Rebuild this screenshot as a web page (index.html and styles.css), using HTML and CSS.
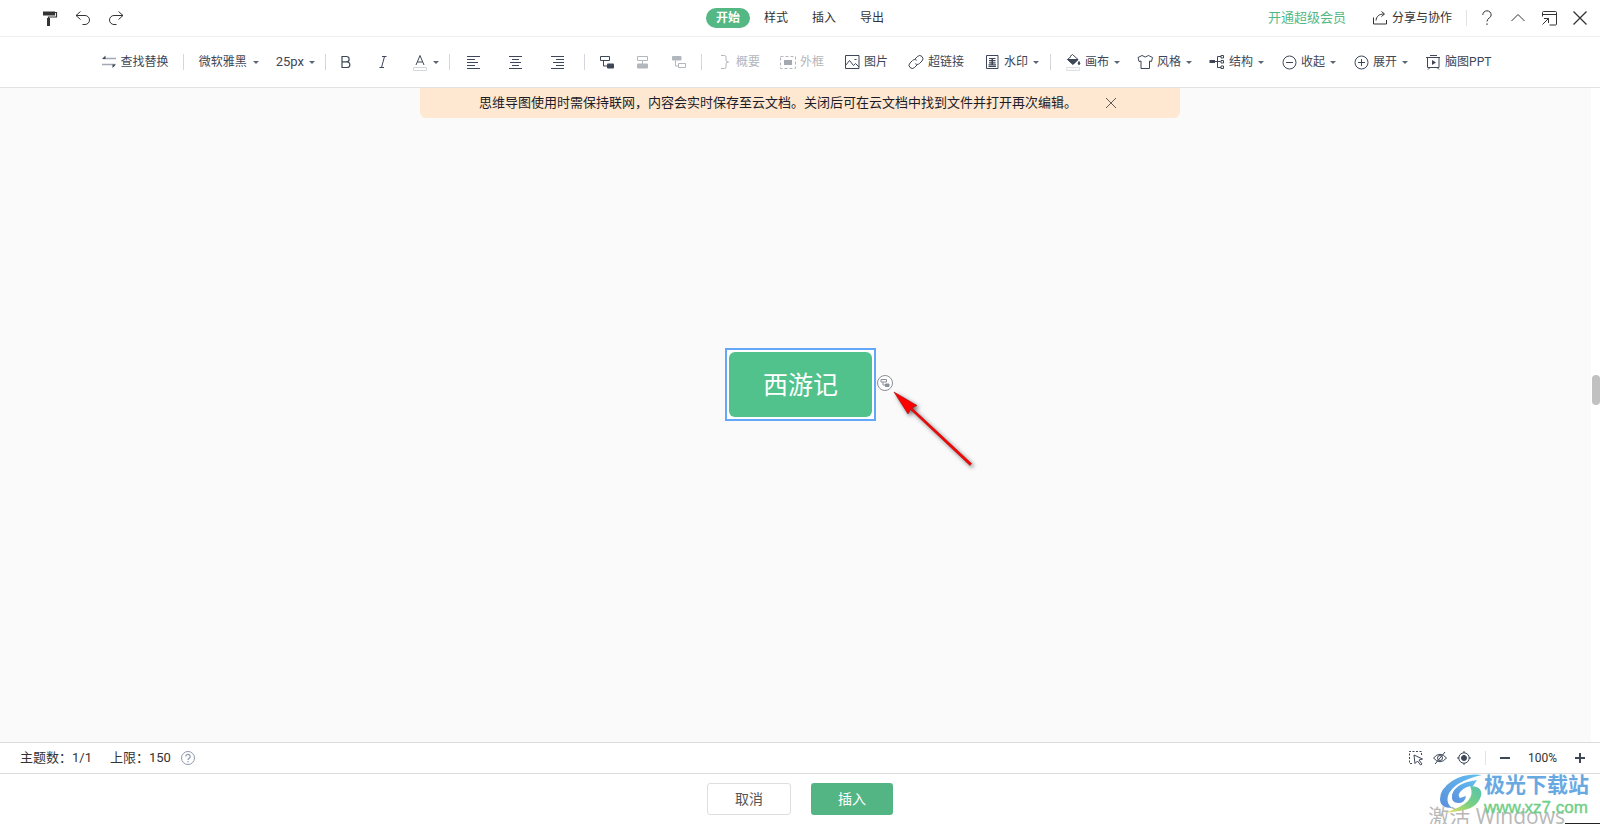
FILE: index.html
```html
<!DOCTYPE html>
<html lang="zh-CN">
<head>
<meta charset="utf-8">
<title>思维导图</title>
<link rel="stylesheet" href="styles.css">
</head>
<body>
<div class="app">
  <header class="topbar">
    <div class="topbar-left">
      <button class="icon-btn" aria-label="格式刷"><svg class="ico" viewBox="0 0 16 16"><path fill="#333" d="M1 1.500h12v4H1z"/><path d="M13 2.500h1.500v4.500H6.500v3" fill="none" stroke="#333" stroke-width="1.200"/><path fill="#333" d="M5 8h3v8H5z"/></svg></button>
      <button class="icon-btn" aria-label="撤销"><svg class="ico line" viewBox="0 0 16 16"><path d="M5.500 1.500 1 5.500l4.500 4M1 5.500h9a4.500 4.500 0 0 1 0 9H7.500"/></svg></button>
      <button class="icon-btn" aria-label="重做"><svg class="ico line" viewBox="0 0 16 16"><path d="M10.500 1.500 15 5.500l-4.500 4M15 5.500H6a4.500 4.500 0 0 0 0 9h2.500"/></svg></button>
    </div>
    <nav class="tabs">
      <button class="tab tab-active">开始</button>
      <button class="tab">样式</button>
      <button class="tab">插入</button>
      <button class="tab">导出</button>
    </nav>
    <div class="topbar-right">
      <a class="vip" href="#">开通超级会员</a>
      <button class="share"><svg class="ico line" viewBox="0 0 16 16"><path d="M1.500 7.500v6.500h13v-4M4 10.500c.3-4 3-6.500 8-6.500M9.500 1.500l3 2.500-3 2.500"/></svg><span>分享与协作</span></button>
      <span class="sep sep-light"></span>
      <div class="window-tools">
        <button class="icon-btn" aria-label="帮助"><svg class="ico line" viewBox="0 0 16 16"><path d="M3.800 5a4.200 4.200 0 0 1 8.400 0c0 3-4.200 3-4.200 6.500M8 13.300v1.700"/></svg></button>
        <button class="icon-btn" aria-label="收起功能区"><svg class="ico line" viewBox="0 0 16 16"><path d="m1.500 11 6.500-6.500 6.500 6.500"/></svg></button>
        <button class="icon-btn" aria-label="还原窗口"><svg class="ico line" viewBox="0 0 16 16"><path d="M1.500 6.500v-4a1 1 0 0 1 1-1h12a1 1 0 0 1 1 1v11.500a1 1 0 0 1-1 1H8.500M1.500 4.500h14M1.500 14.500l6-6M3 8.500h4.500V13"/></svg></button>
        <button class="icon-btn" aria-label="关闭"><svg class="ico line strong" viewBox="0 0 16 16"><path d="m1.500 1.500 13 13m0-13-13 13"/></svg></button>
      </div>
    </div>
  </header>

  <div class="toolbar">
    <div class="group group-find">
      <button class="tool"><svg class="ico" viewBox="0 0 16 16"><path d="M2 4.500h13M1 10.500h13" stroke="#a3a9b3" stroke-width="1.300"/><path fill="#3d4757" d="M1 5l3.500-3.500V5zM15 10.500 11.500 14v-3.500z"/></svg><span>查找替换</span></button>
    </div>
    <span class="sep"></span>
    <div class="group group-font">
      <button class="tool"><span>微软雅黑</span><i class="caret"></i></button>
      <button class="tool tool-size"><span>25px</span><i class="caret"></i></button>
    </div>
    <span class="sep"></span>
    <div class="group group-text">
      <button class="tool" aria-label="加粗"><svg class="ico line" viewBox="0 0 16 16"><path d="M4 2.500h4.500a2.600 2.600 0 0 1 0 5.300H4zM4 7.800h5a2.850 2.850 0 0 1 0 5.700H4z" stroke-width="1.200"/></svg></button>
      <button class="tool" aria-label="倾斜"><svg class="ico line" viewBox="0 0 16 16"><path d="M7 2.500h4.500M4.500 13.500H9M9.500 2.500l-3 11"/></svg></button>
      <button class="tool" aria-label="字体颜色"><svg class="ico line" viewBox="0 0 16 16"><path d="M4 11 8 1.500 12 11M5.500 8h5"/><path d="M1.500 13.500h13v3h-13z" stroke="#d4d7dc" fill="#fff"/></svg><i class="caret"></i></button>
    </div>
    <span class="sep"></span>
    <div class="group group-align">
      <button class="tool" aria-label="左对齐"><svg class="ico line crisp" viewBox="0 0 16 16"><path d="M1 2.500h13M1 5.500h8M1 8.500h11M1 11.500h8M1 14.500h13"/></svg></button>
      <button class="tool" aria-label="居中"><svg class="ico line crisp" viewBox="0 0 16 16"><path d="M1 2.500h13M4 5.500h7M2 8.500h11M4 11.500h7M1 14.500h13"/></svg></button>
      <button class="tool" aria-label="右对齐"><svg class="ico line crisp" viewBox="0 0 16 16"><path d="M1 2.500h13M6 5.500h8M3 8.500h11M6 11.500h8M1 14.500h13"/></svg></button>
    </div>
    <span class="sep"></span>
    <div class="group group-topic">
      <button class="tool" aria-label="子主题"><svg class="ico line" viewBox="0 0 16 16"><path d="M1.500 2.500h9v4h-9zM4.500 6.500V12H9"/><rect x="8" y="9.500" width="7" height="5" rx="1" fill="#3d4757" stroke="none"/></svg></button>
      <button class="tool tool-off" aria-label="同级主题" disabled><svg class="ico line" viewBox="0 0 16 16"><path d="M2.500 2.500h10v4h-10zM7.500 6.500V10"/><rect x="2" y="9.500" width="11" height="5" rx="1" fill="#b2b6bd" stroke="none"/></svg></button>
      <button class="tool tool-off" aria-label="父主题" disabled><svg class="ico line" viewBox="0 0 16 16"><rect x="1" y="2" width="9.500" height="4.500" rx="1" fill="#b2b6bd" stroke="none"/><path d="M4.500 6.500V12H8M7.500 9.500h7v4h-7z"/></svg></button>
    </div>
    <span class="sep"></span>
    <div class="group group-insert">
      <button class="tool tool-off" disabled><svg class="ico line" viewBox="0 0 16 16"><path d="M5 1.500h3.500q1.500 0 1.500 1.500v3q0 2 2.500 2-2.500 0-2.500 2v3q0 1.500-1.500 1.500H5"/></svg><span>概要</span></button>
      <button class="tool tool-off" disabled><svg class="ico line" viewBox="0 0 16 16"><path d="M.5 2.500h15v12H.5z" stroke-dasharray="3 2"/><path d="M4 6h8v5H4z" fill="#a4a9b1" stroke="none"/></svg><span>外框</span></button>
      <button class="tool"><svg class="ico line" viewBox="0 0 16 16"><path d="M1.500 1.500h13.500v13H1.500zM1.500 11.500l4-5 4 5 2-2 3.500 3.500"/><path d="M10.500 5.500h2"/></svg><span>图片</span></button>
      <button class="tool"><svg class="ico line" viewBox="0 0 16 16"><path d="m6.500 5.500 3-3a3.200 3.200 0 0 1 4.500 0 3.200 3.200 0 0 1 0 4.500l-2.500 2.500c-1.300 1.200-3 1.200-4.200.2M9.500 10.500l-3 3a3.200 3.200 0 0 1-4.500 0 3.200 3.200 0 0 1 0-4.500l2.500-2.500c1.300-1.200 3-1.200 4.200-.2"/></svg><span>超链接</span></button>
      <button class="tool"><svg class="ico line" viewBox="0 0 16 16"><path d="M2.500 1.500h11.500v13H2.500zM5 4.500h6.500M4.500 12.500h7.500"/><path d="M5 6h6.500v1.200H5zM5 8.200h6.500v1.200H5zM4.500 10.200h7.500v1.200H4.500zM7.500 4.500h1.500v6H7.500z" fill="#3d4757" stroke="none"/></svg><span>水印</span><i class="caret"></i></button>
    </div>
    <span class="sep"></span>
    <div class="group group-view">
      <button class="tool"><svg class="ico line" viewBox="0 0 16 16"><path d="M5 2.500 7.500.5 13 5.500 8 10 2.500 5.500 6 2.500" /><path d="M2.500 5.500H13L8 10.500zM14 7.500q2 3 0 3t0-3z" fill="#3d4757"/><path d="M1.500 13.500h13v3h-13z" stroke="#dfe1e5" fill="#fafafa"/></svg><span>画布</span><i class="caret"></i></button>
      <button class="tool"><svg class="ico line" viewBox="0 0 16 16"><path d="M5 1.500 1 3.500l1 4 2-.5v7.500h8.500V7l2 .5 1-4-4-2q-3.200 3-6.500 0z"/></svg><span>风格</span><i class="caret"></i></button>
      <button class="tool"><svg class="ico line" viewBox="0 0 16 16"><path d="M6 7.500h5.500M12 2.500H8.500v11H12M12 1.500h2.500v2.500h-2.500zM12 6.500h2.500v2.500h-2.500zM12 12h2.500v2.500h-2.500z"/><path d="M.5 6h5.500v3H.5z" fill="#3d4757" stroke="none"/></svg><span>结构</span><i class="caret"></i></button>
      <button class="tool"><svg class="ico line" viewBox="0 0 16 16"><circle cx="8.500" cy="8.500" r="6.500"/><path d="M5 8.500h7"/></svg><span>收起</span><i class="caret"></i></button>
      <button class="tool"><svg class="ico line" viewBox="0 0 16 16"><circle cx="8.500" cy="8.500" r="6.500"/><path d="M5 8.500h7M8.500 5v7"/></svg><span>展开</span><i class="caret"></i></button>
      <button class="tool"><svg class="ico line" viewBox="0 0 16 16"><path d="M5 1.500h7M1 3.500h14M2.500 3.500v10h11.500v-10M5 13.500l-2 2M12 13.500l2 2"/><path d="m7 6 4 2.500L7 11z" fill="#3d4757" stroke="none"/></svg><span>脑图PPT</span></button>
    </div>
  </div>

  <main class="canvas">
    <div class="notice">
      <span>思维导图使用时需保持联网，内容会实时保存至云文档。关闭后可在云文档中找到文件并打开再次编辑。</span>
      <button class="notice-close" aria-label="关闭提示"><svg viewBox="0 0 12 12"><path d="m1 1 10 10M11 1 1 11" fill="none" stroke="#5f5a55"/></svg></button>
    </div>
    <div class="scene">
      <div class="node"><div class="node-body">西游记</div></div>
      <button class="node-add" aria-label="添加子主题"><svg viewBox="0 0 16 16" fill="none" stroke="#8a8f98"><circle cx="8" cy="8" r="7.500" fill="#fff"/><path d="M4 4.500h5.500v2.500H4zM6 7v3h3"/><path d="M8.500 9H12v2.500H8.500z" fill="#8a8f98"/></svg></button>
      <svg class="arrow" viewBox="0 0 88 84"><path d="M2 2 25 15.500 20 18 79.500 73.500 78 75.500 18.500 19.500 16 24z" fill="#f00" stroke="#a01010" stroke-width=".6"/></svg>
    </div>
    <div class="scrollbar"><div class="thumb"></div></div>
  </main>

  <div class="status">
    <div class="counts">
      <span>主题数：1/1</span>
      <span>上限：150</span>
      <button class="hint" aria-label="说明"><svg class="ico" viewBox="0 0 16 16" fill="none" stroke="#8f99ab"><circle cx="8" cy="8" r="6.500"/><path d="M5.800 6.500a2.200 2.200 0 1 1 3.300 1.900Q8 9 8 10M8 11v1.200" stroke-width="1.200"/></svg></button>
    </div>
    <div class="view-tools">
      <button class="icon-btn" aria-label="框选"><svg class="ico line" viewBox="0 0 16 16"><path d="M4 13.500H1.500v-12h12V5" stroke-dasharray="2 1.500"/><path d="m6 5 8.500 4-3.500 1 3 4-1.500 1-3-4L7 13.500z"/></svg></button>
      <button class="icon-btn" aria-label="隐藏"><svg class="ico line" viewBox="0 0 16 16"><path d="M1.500 8Q8 .5 14.500 8 8 15.500 1.500 8zM13 2 3 14"/><circle cx="8" cy="8" r="2.500"/></svg></button>
      <button class="icon-btn" aria-label="定位"><svg class="ico line" viewBox="0 0 16 16"><circle cx="8" cy="8" r="5.200"/><circle cx="8" cy="8" r="2.500" fill="#3d4757"/><path d="M8 1v2M8 13v2M1 8h2M13 8h2"/></svg></button>
      <span class="sep sep-light"></span>
      <button class="icon-btn" aria-label="缩小"><svg class="ico bold" viewBox="0 0 16 16"><path d="M3 8h10"/></svg></button>
      <span class="zoom">100%</span>
      <button class="icon-btn" aria-label="放大"><svg class="ico bold" viewBox="0 0 16 16"><path d="M3 8h10M8 3v10"/></svg></button>
    </div>
  </div>

  <footer class="footer">
    <button class="btn btn-cancel">取消</button>
    <button class="btn btn-insert">插入</button>
  </footer>

  <div class="activate">激活 Windows</div>
  <div class="brand">
    <svg class="brand-logo" viewBox="0 0 44 40">
      <defs>
        <linearGradient id="blue" x1="1" y1="0" x2="0" y2="1"><stop offset="0" stop-color="#62c0f0"/><stop offset="1" stop-color="#5b8fdc"/></linearGradient>
        <linearGradient id="green" x1="1" y1="0" x2="0" y2="1"><stop offset="0" stop-color="#55c3b0"/><stop offset=".5" stop-color="#7bcf82"/><stop offset="1" stop-color="#eee05a"/></linearGradient>
      </defs>
      <path fill="url(#blue)" d="M43 1Q26-1 13 7 1 15 1 25q0 9 12 9-6-5-4-12Q13 8 43 1z"/>
      <path fill="url(#blue)" d="M38 6Q16 9 13 21q-1 9 8 8 5-1 6-7l-6 2q-3-3 1-7 5-5 12-5z"/>
      <path fill="url(#green)" d="M31 12q13 0 11 10-4 13-22 15l-14 2q17-6 23-12 6-7 2-15z"/>
    </svg>
    <div class="brand-text"><strong>极光下载站</strong><span>www.xz7.com</span></div>
  </div>
  <div class="edge"></div>
</div>
</body>
</html>
```
FILE: styles.css
```css
* { box-sizing: border-box; }
body {
  margin: 0;
  font-family: Roboto, "Noto Sans CJK SC", sans-serif;
  font-size: 12px;
  line-height: 16px;
  color: #333;
  background: #fff;
}
button {
  margin: 0;
  padding: 0;
  border: 0;
  background: none;
  font: inherit;
  color: inherit;
}
svg { display: block; }
.app {
  position: relative;
  display: flex;
  flex-direction: column;
  min-height: 100vh;
  overflow: hidden;
}
.ico { width: 16px; height: 16px; flex: none; overflow: visible; }
.line { fill: none; stroke: #3d4757; stroke-width: 1; }
.crisp { shape-rendering: crispEdges; }
.bold { fill: none; stroke: #3d4757; stroke-width: 2; }
.sep { width: 1px; height: 16px; flex: none; background: #d3d6db; }
.sep-light { background: #e3e3e3; }

.topbar {
  display: grid;
  grid-template-columns: 1fr auto 1fr;
  align-items: center;
  height: 37px;
  border-bottom: 1px solid #f0f0f0;
}
.topbar .line { stroke: #333; }
.topbar .strong { stroke-width: 1.3; }
.topbar-left { display: flex; gap: 17px; padding-left: 42px; }
.tabs { display: flex; gap: 4px; }
.tab { height: 20px; padding: 0 10px; border-radius: 10px; }
.tab-active { background: #54b884; color: #fff; font-weight: 700; }
.topbar-right {
  display: flex;
  align-items: center;
  justify-content: flex-end;
  padding-right: 12px;
}
.vip { margin-right: 26px; font-size: 13px; color: #54b884; text-decoration: none; }
.share { display: flex; gap: 4px; margin-right: 14px; }
.window-tools { display: flex; gap: 15px; padding-left: 12px; }

.toolbar {
  display: flex;
  align-items: center;
  justify-content: center;
  height: 51px;
  padding-right: 8px;
  border-bottom: 1px solid #e2e2e4;
  color: #3d4757;
}
.group { display: flex; align-items: center; white-space: nowrap; }
.group-find { padding-right: 14px; }
.group-font { gap: 16px; padding: 0 9px 0 15px; }
.group-text { gap: 21px; padding: 0 9px 0 12px; }
.group-align { gap: 26px; padding: 0 18px 0 16px; }
.group-topic { gap: 20px; padding: 0 14px; }
.group-insert { gap: 20px; padding: 0 10px 0 14px; }
.group-view { gap: 16px; padding-left: 14px; }
.tool { display: flex; align-items: center; gap: 4px; }
.tool-off { color: #b2b6bd; }
.tool-off .line { stroke: #b2b6bd; }
.group-font .tool { gap: 5px; }
.group-font .tool-size { gap: 4px; font-size: 13px; }
.caret {
  width: 6px;
  height: 3px;
  margin: 0 1px;
  border: solid transparent;
  border-width: 3px 3px 0;
  border-top-color: #5d6674;
}

.canvas {
  position: relative;
  flex: 1;
  background: #fafafa;
}
.notice {
  display: flex;
  align-items: center;
  justify-content: center;
  gap: 28px;
  width: 760px;
  max-width: 100%;
  height: 30px;
  margin: 0 auto;
  padding-right: 4px;
  border-radius: 0 0 6px 6px;
  background: #fee8d1;
  font-size: 13px;
  color: #1c1c28;
  white-space: nowrap;
}
.notice-close svg { width: 12px; height: 12px; }
.scene { position: absolute; left: 50%; top: 260px; }
.node {
  position: absolute;
  left: -75px;
  top: 0;
  padding: 2px;
  border: 2px solid #63a8f8;
  background: #fff;
}
.node-body {
  padding: 16px 34px 13px;
  border-radius: 6px;
  background: #51c28b;
  color: #fff;
  font-size: 25px;
  line-height: 36px;
  white-space: nowrap;
}
.node-add { position: absolute; left: 77px; top: 27px; }
.node-add svg { width: 16px; height: 16px; }
.arrow {
  position: absolute;
  left: 92px;
  top: 42px;
  width: 88px;
  height: 84px;
  overflow: visible;
  filter: drop-shadow(2px 2px 2px rgba(0, 0, 0, 0.55));
}
.scrollbar {
  position: absolute;
  top: 0;
  right: 0;
  bottom: 0;
  width: 9px;
  background: #fff;
}
.thumb {
  width: 8px;
  height: 30px;
  margin: 0 0 0 1px;
  border-radius: 4px;
  background: #c1c1c1;
}
.scrollbar { padding-top: 287px; }

.status {
  display: flex;
  align-items: center;
  justify-content: space-between;
  height: 32px;
  padding: 0 12px 0 20px;
  border: solid #dcdcdc;
  border-width: 1px 0;
  font-size: 13px;
}
.counts { display: flex; align-items: center; gap: 18px; }
.hint { margin-left: -9px; }
.view-tools { display: flex; align-items: center; gap: 8px; }
.view-tools .sep { margin: 0 3px 0 5px; height: 14px; }
.zoom { margin: 0 7px; font-size: 12px; }

.footer {
  display: flex;
  align-items: center;
  justify-content: center;
  gap: 20px;
  height: 50px;
}
.btn { height: 32px; border-radius: 3px; font-size: 14px; }
.btn-cancel { width: 84px; border: 1px solid #dedede; color: #555; }
.btn-insert { width: 82px; background: #54b584; color: #fff; }

.activate {
  position: absolute;
  right: 35px;
  bottom: -6px;
  font-family: "Open Sans", "Noto Sans CJK SC", sans-serif;
  font-size: 21px;
  line-height: 28px;
  color: #b8b8b8;
}
.brand {
  position: absolute;
  right: 11px;
  bottom: 8px;
  display: flex;
  gap: 1px;
}
.brand-logo { width: 44px; height: 40px; }
.brand-text { display: flex; flex-direction: column; gap: 4px; }
.brand-text strong { font-size: 21px; line-height: 22px; color: #69a9e2; }
.brand-text span {
  font-family: "Liberation Sans", sans-serif;
  font-size: 17px;
  line-height: 16px;
  color: #6fce85;
  -webkit-text-stroke: 0.4px #6fce85;
}
.edge {
  position: absolute;
  right: 0;
  bottom: 0;
  width: 35px;
  height: 1px;
  background: #222;
}
```
